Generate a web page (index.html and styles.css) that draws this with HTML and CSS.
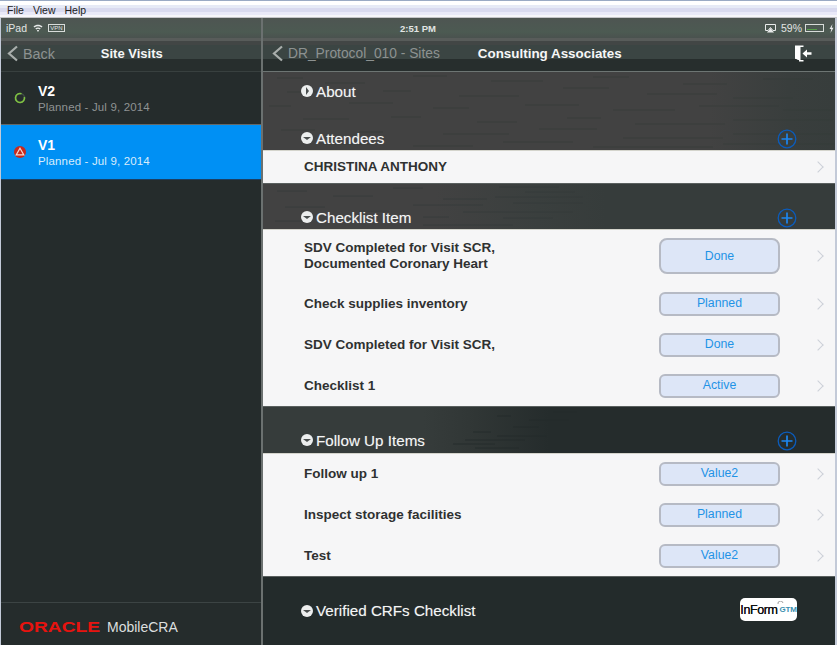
FILE: index.html
```html
<!DOCTYPE html>
<html lang="en">
<head>
<meta charset="utf-8">
<title>Site Visits</title>
<link rel="stylesheet" href="styles.css">
</head>
<body>
<div class="menubar"><span>File</span><span>View</span><span>Help</span></div>
<div class="app">
  <aside class="side">
    <div class="status">
      <span class="carrier">iPad</span>
      <svg class="wifi" width="10" height="8" viewBox="0 0 10 8"><path d="M0.5 2.6C3 0.2 7 0.2 9.500 2.6L8.500 3.600C6.500 1.800 3.500 1.800 1.500 3.600Z M2.300 4.500C3.800 3.200 6.200 3.200 7.700 4.500L6.800 5.400C5.800 4.600 4.200 4.600 3.200 5.400Z M5 8L3.900 6.400C4.500 5.900 5.500 5.900 6.100 6.400Z" fill="#e8eaea"/></svg>
      <span class="vpn">VPN</span>
    </div>
    <div class="nav side-nav">
      <svg class="chev" width="11" height="17" viewBox="0 0 11 17"><path d="M10 1.500L2 8.500L10 15.500" fill="none" stroke="#a9aeac" stroke-width="2.200"/></svg>
      <span class="back">Back</span>
      <span class="nav-title side-title">Site Visits</span>
    </div>
    <div class="visits">
      <div class="visit">
        <svg class="visit-icon" width="12" height="12" viewBox="0 0 12 12"><circle cx="6" cy="6" r="4.500" fill="none" stroke="#3f4a44" stroke-width="1.600"/><path d="M7.500 1.760A4.500 4.500 0 1 0 10.400 5" fill="none" stroke="#7fc241" stroke-width="1.600"/></svg>
        <div><div class="visit-name">V2</div><div class="visit-sub">Planned - Jul 9, 2014</div></div>
      </div>
      <div class="visit active">
        <svg class="visit-icon" width="12" height="12" viewBox="0 0 12 12"><circle cx="6" cy="6" r="6" fill="#c8281c"/><path d="M6 2.300L9.800 8.900H2.200Z" fill="none" stroke="#f4d8d0" stroke-width="1.200"/></svg>
        <div><div class="visit-name">V1</div><div class="visit-sub">Planned - Jul 9, 2014</div></div>
      </div>
    </div>
    <div class="brand"><span class="oracle">ORACLE</span><span class="product">MobileCRA</span></div>
  </aside>
  <main class="main">
    <div class="status main-status">
      <span class="time">2:51 PM</span>
      <svg class="airplay" width="11" height="9" viewBox="0 0 11 9"><path d="M0.500 0.500H10.500V6.500H8L5.500 3.500L3 6.500H0.500Z" fill="none" stroke="#e8eaea"/><path d="M5.500 4L9 8.500H2Z" fill="#e8eaea"/></svg>
      <span class="pct">59%</span>
      <span class="battery"><span class="battery-fill"></span></span>
      <svg class="bolt" width="5" height="9" viewBox="0 0 5 9"><path d="M3.500 0L0.500 5H2.300L1.500 9L4.500 3.800H2.700Z" fill="#e8eaea"/></svg>
    </div>
    <div class="nav main-nav">
      <svg class="chev" width="11" height="17" viewBox="0 0 11 17"><path d="M10 1.500L2 8.500L10 15.500" fill="none" stroke="#a9aeac" stroke-width="2.200"/></svg>
      <span class="back back-long">DR_Protocol_010 - Sites</span>
      <span class="nav-title main-title">Consulting Associates</span>
      <svg class="exit" width="18" height="17" viewBox="0 0 18 17"><path d="M1 0.500H9.500V2H6.500V15H9.500V16.500H5V15L1 13.500Z" fill="#fff"/><path d="M1 1L6 2.500V15.500L1 13.500Z" fill="#fff"/><path d="M17.500 7.200H13V4.500L8.500 8.500L13 12.500V9.800H17.500Z" fill="#fff"/></svg>
    </div>

    <div class="sec-head tex-a h-about">
      <span class="disc right"></span><span class="sec-title">About</span>
    </div>
    <div class="sec-head tex-a h-att">
      <span class="disc"></span><span class="sec-title">Attendees</span>
      <svg class="plus" width="20" height="20" viewBox="0 0 20 20"><circle cx="10" cy="10" r="8.800" fill="none" stroke="#0b5cbc" stroke-width="1.300"/><path d="M10 4.500V15.500M4.500 10H15.500" stroke="#1c86f0" stroke-width="1.700"/></svg>
    </div>
    <div class="rows">
      <div class="row row-person"><span class="row-text">CHRISTINA ANTHONY</span><span class="chevron"></span></div>
    </div>

    <div class="sec-head tex-b h-check">
      <span class="disc"></span><span class="sec-title">Checklist Item</span>
      <svg class="plus" width="20" height="20" viewBox="0 0 20 20"><circle cx="10" cy="10" r="8.800" fill="none" stroke="#0b5cbc" stroke-width="1.300"/><path d="M10 4.500V15.500M4.500 10H15.500" stroke="#1c86f0" stroke-width="1.700"/></svg>
    </div>
    <div class="rows">
      <div class="row row-tall"><span class="row-text">SDV Completed for Visit SCR,<br>Documented Coronary Heart</span><span class="pill pill-tall">Done</span><span class="chevron"></span></div>
      <div class="row"><span class="row-text">Check supplies inventory</span><span class="pill">Planned</span><span class="chevron"></span></div>
      <div class="row"><span class="row-text">SDV Completed for Visit SCR,</span><span class="pill">Done</span><span class="chevron"></span></div>
      <div class="row"><span class="row-text">Checklist 1</span><span class="pill">Active</span><span class="chevron"></span></div>
    </div>

    <div class="sec-head tex-c h-follow">
      <span class="disc"></span><span class="sec-title">Follow Up Items</span>
      <svg class="plus" width="20" height="20" viewBox="0 0 20 20"><circle cx="10" cy="10" r="8.800" fill="none" stroke="#0b5cbc" stroke-width="1.300"/><path d="M10 4.500V15.500M4.500 10H15.500" stroke="#1c86f0" stroke-width="1.700"/></svg>
    </div>
    <div class="rows">
      <div class="row"><span class="row-text">Follow up 1</span><span class="pill">Value2</span><span class="chevron"></span></div>
      <div class="row"><span class="row-text">Inspect storage facilities</span><span class="pill">Planned</span><span class="chevron"></span></div>
      <div class="row"><span class="row-text">Test</span><span class="pill">Value2</span><span class="chevron"></span></div>
    </div>

    <div class="sec-head h-crf">
      <span class="disc"></span><span class="sec-title">Verified CRFs Checklist</span>
      <span class="inform"><span class="inform-name">InForm</span><svg class="inform-ring" width="7" height="6" viewBox="0 0 7 6"><path d="M1 3A2.500 2.500 0 0 1 6 2" fill="none" stroke="#888" stroke-width=".8"/></svg><span class="inform-gtm">GTM</span></span>
    </div>
  </main>
</div>
</body>
</html>
```
FILE: styles.css
```css
* { box-sizing: border-box; }
html, body { margin: 0; height: 100%; overflow: hidden; }
body {
  display: flex;
  flex-direction: column;
  background: #c3cad8;
  font-family: "Liberation Sans", Arial, sans-serif;
}
.menubar {
  height: 18px;
  flex: none;
  display: flex;
  align-items: center;
  gap: 9px;
  padding: 1px 0 1px 7px;
  border-top: 1px solid #9aaac4;
  font-size: 10.500px;
  color: #222;
  background: linear-gradient(#fff 0 4px, #e6eaf6 4px 7px, #d9daef 7px 11px, #e9e9f8 11px 14px, #f6f6fa 14px 16px, #c4c4c8 16px);
}
.app {
  flex: 1;
  min-height: 0;
  display: flex;
  margin: 0 2px 0 1px;
}

/* Left panel */
.side {
  width: 260px;
  flex: none;
  display: flex;
  flex-direction: column;
  background: #252c2c;
}
.status {
  height: 20px;
  flex: none;
  display: flex;
  align-items: center;
  padding-left: 5px;
  color: #e2e5e4;
  font-size: 10px;
  background: linear-gradient(#4e5552, #4c5a52 70%, #4a524f);
}
.carrier { font-size: 10.500px; }
.wifi { margin-left: 6px; }
.vpn {
  margin-left: 5px;
  width: 17px;
  height: 8px;
  border: 1px solid #d8dcda;
  font-size: 6px;
  line-height: 6px;
  text-align: center;
}
.nav {
  height: 34px;
  flex: none;
  display: flex;
  align-items: center;
  padding-bottom: 2px;
  background: linear-gradient(#585c5a 0 3px, #424645 3px 7px, #3b4543 7px 21px, #272e2d 21px);
}
.side-nav { padding-left: 6px; border-bottom: 1px solid #38403f; }
.chev { flex: none; }
.back {
  margin-left: 5px;
  font-size: 14.300px;
  color: #8d9291;
}
.nav-title {
  font-size: 13.400px;
  font-weight: bold;
  color: #f6f7f7;
}
.side-title { margin-left: 46px; font-size: 13px; }
.visits { flex: 1; }
.visit {
  display: flex;
  align-items: center;
  height: 53px;
  padding-left: 13px;
  gap: 12px;
  border-bottom: 1px solid #646867;
}
.visit.active {
  height: 55px;
  background: #0090f4;
  border-bottom: 1px solid #1b3f63;
}
.visit-icon { flex: none; }
.visit-name {
  font-size: 14px;
  line-height: 17px;
  font-weight: bold;
  color: #fff;
}
.visit-sub {
  font-size: 11.500px;
  line-height: 13px;
  margin-top: 1px;
  letter-spacing: 0.150px;
  color: #8f9393;
}
.visit.active .visit-sub { color: #d8ecfb; }
.brand {
  height: 43px;
  flex: none;
  display: flex;
  align-items: center;
  padding: 6px 0 0 18px;
  border-top: 1px solid #3c4444;
}
.oracle {
  width: 81px;
  font-size: 15.500px;
  font-weight: bold;
  color: #e8130f;
  white-space: nowrap;
  transform: scaleX(1.24);
  transform-origin: left center;
}
.product {
  margin-left: 7px;
  font-size: 14px;
  color: #dcdfdf;
}

/* Right panel */
.main {
  flex: 1;
  min-width: 0;
  display: flex;
  flex-direction: column;
  border-left: 2px solid #6b7170;
  background: #232b2b;
}
.main-status { padding: 0 0 0 137px; }
.time {
  font-size: 9.500px;
  font-weight: bold;
  width: 36px;
  white-space: nowrap;
}
.airplay { margin-left: 329px; }
.pct { margin-left: 5px; font-size: 10.500px; }
.battery {
  margin-left: 3px;
  width: 19px;
  height: 8px;
  padding: 1px;
  border: 1px solid #d8dcda;
  display: flex;
}
.battery-fill { width: 10px; background: #57a04a; height: 1px; align-self: flex-end; }
.bolt { margin-left: 5px; }
.main-nav { padding-left: 9px; border-bottom: 1px solid #6d7573; }
.back-long { font-size: 13.800px; }
.main-title { margin-left: 38px; }
.exit { margin-left: 172px; }

.sec-head {
  flex: none;
  display: flex;
  align-items: flex-end;
  padding: 0 38px 2px 38px;
}
.h-about { height: 31px; }
.h-att { height: 47px; }
.h-check { height: 46px; }
.h-follow { height: 47px; padding-bottom: 3px; }
.tex-a {
  background:
    url("data:image/svg+xml,%3Csvg xmlns='http://www.w3.org/2000/svg' width='572' height='78'%3E%3Cpath stroke='%23343a39' stroke-opacity='.55' d='M14 6h26M62 11h40M150 4h34M228 9h52M330 5h36M420 12h44M500 7h50M24 20h30M120 19h28M196 24h60M300 16h46M384 22h70M470 26h60M6 34h22M86 31h44M170 36h36M262 33h54M350 38h62M436 34h80M520 38h50M40 47h46M128 45h30M214 50h40M304 46h34M372 52h90M470 48h100M18 58h34M96 60h24M180 62h66M276 57h58M360 66h100M470 62h100M60 72h50M150 74h60M240 70h70M330 75h120M460 72h112'/%3E%3C/svg%3E") 0 0 / 572px 78px no-repeat,
    linear-gradient(90deg, #424242 0 78%, #393e3d 92%, #373d3c);
}
.h-att.tex-a { background-position: 0 -31px, 0 0; }
.tex-b {
  background:
    url("data:image/svg+xml,%3Csvg xmlns='http://www.w3.org/2000/svg' width='330' height='46'%3E%3Cpath stroke='%23343a39' stroke-opacity='.7' d='M14 8h30M70 13h40M130 5h30M180 16h44M236 4h60M262 9h50M22 24h40M96 28h30M150 22h70M232 14h88M250 20h70M12 38h34M160 34h26M200 29h110M240 35h50M160 42h90'/%3E%3C/svg%3E") 0 0 / 330px 46px no-repeat,
    linear-gradient(90deg, #424242 0 30%, #3a3f3e 48%, #363c3b 60%);
}
.tex-c {
  background:
    url("data:image/svg+xml,%3Csvg xmlns='http://www.w3.org/2000/svg' width='200' height='47'%3E%3Cpath stroke='%23232a2a' stroke-opacity='.85' d='M84 10h14M140 6h24M100 21h26M60 26h18M52 34h60M84 30h50M40 38h42M62 42h44M116 14h40'/%3E%3C/svg%3E") 150px 0 / 200px 47px no-repeat,
    linear-gradient(90deg, #363c3b 0 28%, #313736 36%, #252c2c 50%);
}
.disc {
  position: relative;
  flex: none;
  width: 12px;
  height: 12px;
  margin: 0 3px 4px 0;
  border-radius: 50%;
  background: #eceeee;
}
.disc::after {
  content: "";
  position: absolute;
  left: 2px;
  top: 5px;
  border: 4px solid transparent;
  border-top: 3px solid #4a4e4e;
  border-bottom: 0;
}
.disc.right::after {
  left: 5px;
  top: 2px;
  border: 4px solid transparent;
  border-left: 3px solid #4a4e4e;
  border-right: 0;
}
.sec-title {
  font-size: 15.200px;
  line-height: 18px;
  color: #f4f5f5;
  text-shadow: 0 0 1px #ffffff55;
}
.plus { margin-left: auto; transform: translate(0, 1px); }

.rows {
  flex: none;
  position: relative;
  background: linear-gradient(#d4d4cc 0 1px, transparent 1px), #f6f6f7;
  box-shadow: 0 1px 0 #5a605f;
}
.row {
  display: flex;
  align-items: center;
  height: 41px;
  padding: 0 12px 0 41px;
}
.row-person { height: 33px; }
.row-tall { height: 54px; }
.row-text {
  flex: 1;
  font-size: 13.500px;
  line-height: 16px;
  font-weight: bold;
  color: #2f3131;
}
.pill {
  width: 121px;
  height: 24px;
  margin-right: 38px;
  padding-bottom: 1px;
  flex: none;
  display: flex;
  align-items: center;
  justify-content: center;
  border: 2px solid #b6bac4;
  border-radius: 6px;
  background: #dde6f7;
  color: #1f93e6;
  font-size: 12.300px;
}
.pill-tall { height: 36px; border-radius: 8px; }
.chevron {
  flex: none;
  width: 8px;
  height: 8px;
  margin-left: -3px;
  border-top: 1.500px solid #ccd0d8;
  border-right: 1.500px solid #ccd0d8;
  transform: translateX(-1px) rotate(45deg);
}
.h-crf {
  flex: 1;
  align-items: flex-start;
  padding-top: 26px;
}
.h-crf .disc { margin-top: 3px; }
.inform {
  margin-left: auto;
  margin-top: -4px;
  width: 57px;
  height: 23px;
  display: flex;
  align-items: center;
  justify-content: center;
  border-radius: 5px;
  background: #fff;
  white-space: nowrap;
}
.inform-name {
  font-size: 12.500px;
  color: #111;
  letter-spacing: -0.400px;
  text-shadow: 0 0 .5px #111;
}
.inform-ring { flex: none; align-self: flex-start; margin: 3px -4px 0 -1px; }
.inform-gtm {
  font-size: 8px;
  font-weight: bold;
  letter-spacing: -0.200px;
  color: #3a8fb0;
}
```
